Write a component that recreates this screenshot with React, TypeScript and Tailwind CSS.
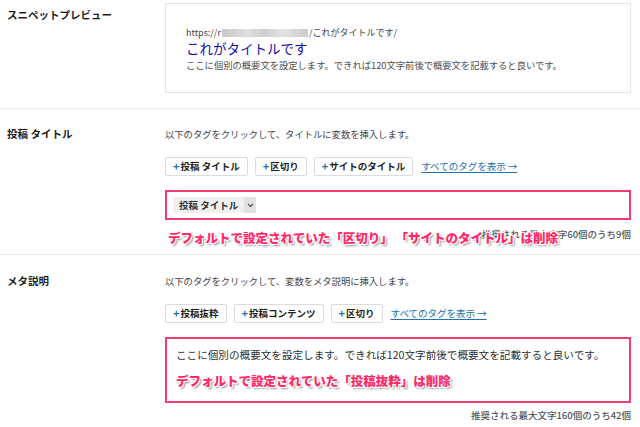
import React from "react";

const font = "font-['Noto_Sans_CJK_JP','Noto_Sans',sans-serif]";

function Tag({ label }: { label: string }) {
  return (
    <span className="flex h-[19px] items-center rounded-[2px] border border-[#dcdcde] bg-white px-[7px] text-[9.5px] font-bold text-[#1e1e1e]">
      <span className="mr-[1px] text-[11px] font-bold text-[#2271b1]">+</span>
      {label}
    </span>
  );
}

function TagRow({ tags }: { tags: string[] }) {
  return (
    <div className="flex items-center gap-[7px]">
      {tags.map((t) => (
        <Tag key={t} label={t} />
      ))}
      <a className="ml-[1px] text-[9.5px] text-[#2271b1] underline underline-offset-2">
        すべてのタグを表示 →
      </a>
    </div>
  );
}

const note =
  "whitespace-nowrap text-[12.5px] font-black leading-[16px] text-[#ff2a6a] [text-shadow:1px_1px_0_#fff,-1px_-1px_0_#fff,1px_-1px_0_#fff,-1px_1px_0_#fff,2px_2px_2px_rgba(0,0,0,0.45)]";

export default function App() {
  return (
    <div className={`h-[427px] w-[640px] overflow-hidden bg-white text-[#1e1e1e] ${font}`}>
      {/* snippet preview */}
      <div className="grid grid-cols-[165px_1fr] border-b border-[#ececec] pb-[15px] pr-[9px] pt-[3px]">
        <div className="pl-[7px] pt-[4px] text-[10.5px] font-bold">スニペットプレビュー</div>
        <div className="h-[90px] border border-[#e6e6e6] pl-[20px] pt-[23px]">
          <div className="flex text-[9px] leading-[12px] text-[#3c434a]">
            https://r
            <span className="mx-[1px] mt-[2px] h-[8px] w-[86px] bg-[linear-gradient(90deg,#c9c9c9,#dedede_30%,#cfcfcf_50%,#e2e2e2_70%,#cdcdcd)]" />
            /これがタイトルです/
          </div>
          <div className="mt-[1px] text-[13.5px] leading-[17px] text-[#1a0dab]">これがタイトルです</div>
          <div className="mt-[2px] text-[9.3px] leading-[12px] text-[#4d4d4d]">
            ここに個別の概要文を設定します。できれば120文字前後で概要文を記載すると良いです。
          </div>
        </div>
      </div>

      {/* post title */}
      <div className="relative grid grid-cols-[165px_1fr] border-b border-[#ececec] pb-[13px] pr-[9px] pt-[18px]">
        <div className="pl-[7px] text-[10.5px] font-bold leading-[14px]">投稿 タイトル</div>
        <div>
          <div className="text-[9.3px] leading-[14px] text-[#3c434a]">
            以下のタグをクリックして、タイトルに変数を挿入します。
          </div>
          <div className="mt-[16px]">
            <TagRow tags={["投稿 タイトル", "区切り", "サイトのタイトル"]} />
          </div>
          <div className="mt-[14px] flex h-[30px] items-center border-2 border-[#f43a6e] pl-[6px]">
            <span className="flex h-[16px] items-center rounded-[2px] bg-[#f0f0f1] text-[9.5px] font-bold text-[#2c3338]">
              <span className="px-[6px]">投稿 タイトル</span>
              <span className="flex h-full w-[12px] items-center justify-center bg-[#e2e2e4]">
                <svg width="7" height="5" viewBox="0 0 7 5" fill="none" stroke="#555" strokeWidth="1.2">
                  <path d="M1 1l2.5 2.5L6 1" />
                </svg>
              </span>
            </span>
          </div>
          <div className="mt-[8px] text-right text-[9.5px] font-medium leading-[13px] text-[#50575e]">
            推奨される最大文字60個のうち9個
          </div>
        </div>
        <div className={`absolute left-[168px] top-[121px] ${note}`}>
          デフォルトで設定されていた「区切り」 「サイトのタイトル」は削除
        </div>
      </div>

      {/* meta description */}
      <div className="grid grid-cols-[165px_1fr] pr-[9px] pt-[19px]">
        <div className="pl-[7px] text-[10.5px] font-bold leading-[14px]">メタ説明</div>
        <div>
          <div className="text-[9.3px] leading-[14px] text-[#3c434a]">
            以下のタグをクリックして、変数をメタ説明に挿入します。
          </div>
          <div className="mt-[16px]">
            <TagRow tags={["投稿抜粋", "投稿コンテンツ", "区切り"]} />
          </div>
          <div className="mt-[14px] h-[66px] border-2 border-[#f43a6e] pl-[9px] pt-[9px]">
            <div className="text-[10.6px] leading-[14px] text-[#2c3338]">
              ここに個別の概要文を設定します。できれば120文字前後で概要文を記載すると良いです。
            </div>
            <div className={`mt-[11px] ${note}`}>デフォルトで設定されていた「投稿抜粋」は削除</div>
          </div>
          <div className="mt-[6px] text-right text-[9.5px] font-medium leading-[13px] text-[#50575e]">
            推奨される最大文字160個のうち42個
          </div>
        </div>
      </div>
    </div>
  );
}
